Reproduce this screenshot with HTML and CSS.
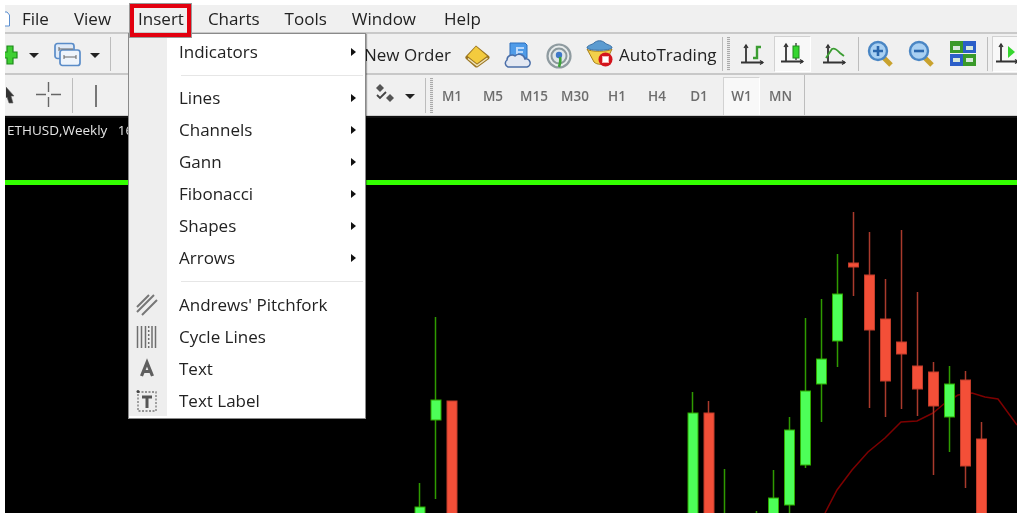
FILE: index.html
```html
<!DOCTYPE html>
<html lang="en">
<head>
<meta charset="utf-8">
<title>MetaTrader Insert menu</title>
<link rel="stylesheet" href="styles.css">
</head>
<body>
<div class="app">
  <nav class="menubar">
    <svg class="doc-icon" width="5" height="16" viewBox="0 0 5 16"><path d="M-2 1H2L4.500 4V15H-2" fill="#fff" stroke="#5b8fd0" stroke-width="1"/></svg>
    <span class="menu-title">File</span>
    <span class="menu-title">View</span>
    <span class="menu-title active">Insert</span>
    <span class="menu-title">Charts</span>
    <span class="menu-title">Tools</span>
    <span class="menu-title wide">Window</span>
    <span class="menu-title">Help</span>
  </nav>

  <div class="toolbar tb-main">
    <svg class="ic plus" width="13" height="22" viewBox="0 0 13 22"><path d="M-4 8h6V2h6v6h4v6H8v6H2v-6h-6z" fill="#3fcf33" stroke="#1d8a1a" stroke-width="1.200"/></svg>
    <span class="caret c1"></span>
    <svg class="ic prof" width="27" height="25" viewBox="0 0 27 25"><rect x="1" y="1.500" width="19" height="15" rx="2.500" fill="#dfeaf8" stroke="#5a8cc8" stroke-width="1.700"/><rect x="6" y="8" width="20" height="15.500" rx="2.500" fill="#eef4fb" stroke="#5a8cc8" stroke-width="1.700"/><path d="M5 5v4M5 7h14M10 13v4M10 15h12M22 13v4" stroke="#666" fill="none"/></svg>
    <span class="caret c2"></span>
    <i class="sep s1"></i>
    <span class="tb-text new-order">New Order</span>
    <svg class="ic book" width="27" height="26" viewBox="0 0 27 26"><path d="M12 2.500 25 13c.8 1 .8 2 0 3L14 24c-1 .8-2 .8-3 0L2 16c-1-1-1-2 0-3z" fill="#9a7420"/><path d="M12 3.500 23 13 13 20.500 3.500 13z" fill="#f3cb3e"/><path d="M4 15.500 13 22.500 23.500 15" fill="none" stroke="#efe3b8" stroke-width="1.500"/></svg>
    <svg class="ic cloud" width="27" height="28" viewBox="0 0 27 28"><path d="M6 2h15l2 2v13H6z" fill="#4f9be8" stroke="#2d6fbd"/><path d="M13 6v8M14 7h6M14 11h5" stroke="#dcecff" stroke-width="1.600"/><path d="M4 26a4 4 0 0 1-1-7 5 5 0 0 1 8-4 6 6 0 0 1 10 3 4 4 0 0 1 2 8z" fill="#e3e8f2" stroke="#4a6ea8" stroke-width="1.500"/></svg>
    <svg class="ic radio" width="27" height="28" viewBox="0 0 27 28"><circle cx="13" cy="14" r="11.500" fill="#e8ecec" stroke="#8f9ba0" stroke-width="2.200"/><circle cx="13" cy="14" r="7.500" fill="#dfe6e8" stroke="#8b989c" stroke-width="2"/><circle cx="13" cy="13" r="3.200" fill="#3f78c8"/><path d="M14 15c1 4 0 7-1 10" stroke="#3ea33a" stroke-width="2.600" fill="none"/></svg>
    <svg class="ic auto" width="27" height="28" viewBox="0 0 27 28"><path d="M1 10c2 3 22 3 25 0l-6 13c-3 3-9 3-12 0z" fill="#f3d04a" stroke="#a8801a"/><path d="M1 9c0-3 5-3 7-5 3-3 8-3 11 0 2 2 7 2 7 5-3 3-22 3-25 0z" fill="#5b9bd0" stroke="#3a70a5"/><circle cx="19.500" cy="20.500" r="7" fill="#d3141c"/><rect x="16.500" y="17.500" width="6" height="6" fill="#fff" stroke="#f6b0b0"/></svg>
    <span class="tb-text auto-text">AutoTrading</span>
    <i class="sep s2"></i>
    <i class="grip g1"></i>
    <svg class="ic ch1" width="24" height="24" viewBox="0 0 24 24"><use href="#axes"/><path d="M12 15h4V4h4" fill="none" stroke="#3b9d32" stroke-width="2.400"/></svg>
    <span class="pressed p-candle"><svg width="24" height="28" viewBox="0 0 24 28"><g transform="translate(0 2)"><use href="#axes"/></g><path d="M15 3v17" stroke="#222" stroke-width="1.200"/><rect x="12" y="6" width="6" height="12" fill="#35d62e" stroke="#1f8a1a"/></svg></span>
    <svg class="ic ch3" width="24" height="24" viewBox="0 0 24 24"><use href="#axes"/><path d="M3 15 9 6c3-2 6 2 8 4l4 3" fill="none" stroke="#3b9d32" stroke-width="1.800"/></svg>
    <i class="sep s3"></i>
    <svg class="ic zin" width="27" height="28" viewBox="0 0 27 28"><path d="M16 17l8 8" stroke="#c9a22e" stroke-width="5"/><circle cx="11" cy="11" r="9" fill="#a9d0f2" stroke="#4a86c4" stroke-width="2.400"/><path d="M6 11h10M11 6v10" stroke="#2a66ac" stroke-width="2.600"/></svg>
    <svg class="ic zout" width="27" height="28" viewBox="0 0 27 28"><path d="M16 17l8 8" stroke="#c9a22e" stroke-width="5"/><circle cx="11" cy="11" r="9" fill="#a9d0f2" stroke="#4a86c4" stroke-width="2.400"/><path d="M6 11h10" stroke="#2a66ac" stroke-width="2.600"/></svg>
    <svg class="ic tile" width="26" height="25" viewBox="0 0 26 25"><rect x="0" y="0" width="13" height="12" fill="#3a9a2a"/><rect x="13" y="0" width="13" height="12" fill="#2c5fc8"/><rect x="0" y="13" width="13" height="12" fill="#2c5fc8"/><rect x="13" y="13" width="13" height="12" fill="#3a9a2a"/><path d="M3 5h7v4H3zM16 5h7v4h-7zM3 17h7v4H3zM16 17h7v4h-7z" fill="#d8e8dc"/></svg>
    <i class="sep s4"></i>
    <span class="pressed p-last"><svg width="26" height="28" viewBox="0 0 26 28"><g transform="translate(3 2)"><use href="#axes"/></g><path d="M15 6v12l7-6z" fill="#35d62e"/></svg></span>
  </div>

  <div class="toolbar tb-tools">
    <svg class="ic cursor" width="10" height="22" viewBox="0 0 10 22"><path d="M0 3 8 12H5l2 7H3L1 13l-3 3z" fill="#333" stroke="#666" stroke-width=".6"/></svg>
    <svg class="ic cross" width="25" height="25" viewBox="0 0 25 25"><path d="M0 12.500h10M15 12.500h10M12.500 0v10M12.500 15v10" stroke="#666" stroke-width="1.400"/></svg>
    <i class="sep s5"></i>
    <i class="vline"></i>
    <svg class="ic objs" width="23" height="22" viewBox="0 0 23 22"><path d="M7 1l4 4-4 4-4-4zM17 11l4 4-4 4-4-4z" fill="#555"/><path d="M4 12l3 3 6-6" fill="none" stroke="#444" stroke-width="1.800"/></svg>
    <span class="caret c3"></span>
    <i class="sep s6"></i>
    <i class="grip g2"></i>
    <span class="tf w-m1">M1</span>
    <span class="tf w-m5">M5</span>
    <span class="tf w-m15">M15</span>
    <span class="tf w-m30">M30</span>
    <span class="tf w-h1">H1</span>
    <span class="tf w-h4">H4</span>
    <span class="tf w-d1">D1</span>
    <span class="tf w-w1 on">W1</span>
    <span class="tf w-mn">MN</span>
    <i class="sep s7"></i>
  </div>

  <div class="chart">
    <span class="chart-title">ETHUSD,Weekly&nbsp;&nbsp; 16</span>
    <svg class="chart-svg" width="1012" height="397" viewBox="5 116 1012 397">
      <rect x="5" y="180" width="1012" height="5" fill="#33ff00"/>
      <polyline class="ma" points="825,513 837,490 852,470 868,452 885,438 901,422 917,421 933,413 945,403 958,395 972,393 985,397 998,399 1017,425"/>
      <g class="wick-g">
        <path d="M419.500 483V513M435.500 317V499M692.500 392V513M724.500 469V513M756.500 511V513M773.500 470V513M789.500 417V513M805.500 318V468M821.500 299V422M837.500 254V367M949.500 366V452"/>
      </g>
      <g class="wick-r">
        <path d="M708.500 401V513M853.500 212V296M869.500 232V408M885.500 279V417M901.500 230V409M917.500 292V416M933.500 362V475M965.500 371V488M981.500 422V513"/>
      </g>
      <g class="body-g">
        <rect x="415" y="507" width="10" height="8"/>
        <rect x="431" y="400" width="10" height="20"/>
        <rect x="688" y="413" width="10" height="102"/>
        <rect x="768.500" y="498" width="10" height="17"/>
        <rect x="784.500" y="430" width="10" height="75"/>
        <rect x="800.500" y="391" width="10" height="74"/>
        <rect x="816.500" y="359" width="10" height="25"/>
        <rect x="832.500" y="294" width="10" height="47"/>
        <rect x="944.500" y="384" width="10" height="33"/>
      </g>
      <g class="body-r">
        <rect x="447" y="401" width="10" height="114"/>
        <rect x="704" y="413" width="10" height="102"/>
        <rect x="848.500" y="263" width="10" height="4"/>
        <rect x="864.500" y="275" width="10" height="55"/>
        <rect x="880.500" y="319" width="10" height="62"/>
        <rect x="896.500" y="342" width="10" height="12"/>
        <rect x="912.500" y="366" width="10" height="23"/>
        <rect x="928.500" y="372" width="10" height="34"/>
        <rect x="960.500" y="380" width="10" height="86"/>
        <rect x="976.500" y="439" width="10" height="76"/>
      </g>
    </svg>
  </div>

  <div class="dropdown">
    <div class="gutter"></div>
    <div class="row"><span>Indicators</span><b class="arrow"></b></div>
    <hr class="divider">
    <div class="row"><span>Lines</span><b class="arrow"></b></div>
    <div class="row"><span>Channels</span><b class="arrow"></b></div>
    <div class="row"><span>Gann</span><b class="arrow"></b></div>
    <div class="row"><span>Fibonacci</span><b class="arrow"></b></div>
    <div class="row"><span>Shapes</span><b class="arrow"></b></div>
    <div class="row"><span>Arrows</span><b class="arrow"></b></div>
    <hr class="divider divider-low">
    <div class="row">
      <svg class="row-ic" width="22" height="22" viewBox="0 0 22 22"><path d="M1 13 13 1M1 18 18 1M6 21 21 6" stroke="#777" stroke-width="2" fill="none"/></svg>
      <span>Andrews' Pitchfork</span>
    </div>
    <div class="row">
      <svg class="row-ic" width="22" height="24" viewBox="0 0 22 24"><path d="M1.500 1v22M5.500 1v22M9.500 1v22M19.500 1v22M16 1v22" stroke="#6f6f6f" stroke-width="1.500" fill="none"/><path d="M12.700 1v22" stroke="#6f6f6f" stroke-width="1.500" stroke-dasharray="2 2" fill="none"/></svg>
      <span>Cycle Lines</span>
    </div>
    <div class="row">
      <svg class="row-ic" width="22" height="22" viewBox="0 0 22 22"><path d="M5.500 18 11 4.500 16.500 18M7.500 13.500h7" stroke="#5f5f5f" stroke-width="3.200" fill="none"/></svg>
      <span>Text</span>
    </div>
    <div class="row">
      <svg class="row-ic" width="22" height="24" viewBox="0 0 22 24"><rect x="2" y="3" width="18" height="19" fill="none" stroke="#777" stroke-width="1.300" stroke-dasharray="2 1.500"/><circle cx="2" cy="2.500" r="1.500" fill="#444"/><path d="M6 8h10M11 8v11" stroke="#555" stroke-width="3" fill="none"/></svg>
      <span>Text Label</span>
    </div>
  </div>
  <span class="red-box"></span>
</div>

<svg width="0" height="0" class="defs">
  <defs>
    <g id="axes" fill="none" stroke="#333" stroke-width="1.800">
      <path d="M5 2v18M0 19.500h22"/>
      <path d="M3 5l2-3 2 3M19 17.500l3 2-3 2" stroke-width="1.300"/>
    </g>
  </defs>
</svg>
</body>
</html>
```

FILE: styles.css
```css
* { box-sizing: border-box; }

html, body {
  margin: 0;
  padding: 0;
  background: #fff;
}

body {
  width: 1024px;
  height: 520px;
  overflow: hidden;
  font-family: "Open Sans", "Liberation Sans", sans-serif;
  color: #222;
}

.app {
  position: relative;
  width: 1012px;
  height: 508px;
  margin: 5px 0 0 5px;
  display: flex;
  flex-direction: column;
  background: #f0f0f0;
  filter: blur(0.35px);
}

.defs { position: absolute; }

/* menu bar */
.menubar {
  height: 29px;
  display: flex;
  align-items: center;
  gap: 25px;
  padding-left: 17px;
  position: relative;
  font-size: 17px;
  border-bottom: 2px solid #c9c9c9;
}

.doc-icon {
  position: absolute;
  left: 0;
  top: 6px;
}

.menu-title { white-space: nowrap; }
.menu-title.active { margin-left: 2px; margin-right: -1px; }
.menu-title.wide { margin-right: 3px; }

/* toolbars */
.toolbar {
  position: relative;
  flex: none;
  overflow: hidden;
  border-bottom: 2px solid #c8c8c8;
}

.tb-main { height: 41px; }
.tb-tools { height: 41px; border-bottom: 1px solid #cfcfcf; }

.ic, .caret, .sep, .grip, .vline, .tb-text, .pressed, .tf {
  position: absolute;
}

.tb-text {
  top: 9px;
  font-size: 17px;
  white-space: nowrap;
}

.new-order { left: 359px; }
.auto-text { left: 614px; }

.caret {
  width: 0;
  height: 0;
  border-left: 5.500px solid transparent;
  border-right: 5.500px solid transparent;
  border-top: 5px solid #222;
}

.c1 { left: 24px; top: 19px; }
.c2 { left: 85px; top: 19px; }
.c3 { left: 400px; top: 19px; }

.sep { width: 1px; top: 3px; bottom: 2px; background: #bdbdbd; }
.s1 { left: 105px; }
.s2 { left: 717px; }
.s3 { left: 853px; }
.s4 { left: 982px; }
.s5 { left: 67px; }
.s6 { left: 420px; }
.s7 { left: 799px; top: 0; bottom: 0; }

.grip {
  top: 3px;
  bottom: 2px;
  width: 3px;
  background: repeating-linear-gradient(#aaa 0 1px, #e8e8e8 1px 2px);
}
.g1 { left: 722px; }
.g2 { left: 425px; }

.vline { left: 90px; top: 10px; width: 2px; height: 22px; background: #777; }

.plus { left: 0; top: 10px; }
.prof { left: 49px; top: 8px; }
.book { left: 459px; top: 9px; }
.cloud { left: 499px; top: 7px; }
.radio { left: 541px; top: 8px; }
.auto { left: 581px; top: 5px; }
.ch1 { left: 736px; top: 9px; }
.ch3 { left: 818px; top: 9px; }
.zin { left: 862px; top: 6px; }
.zout { left: 903px; top: 6px; }
.tile { left: 945px; top: 7px; }

.pressed {
  top: 2px;
  height: 36px;
  background: #f8f8f8;
  border: 1px solid #d2d2d2;
  border-right-color: #fff;
  border-bottom-color: #fff;
}
.p-candle { left: 769px; width: 37px; padding: 3px 0 0 6px; }
.p-last { left: 987px; width: 30px; padding: 3px 0 0 0; border-right: 0; }

.cursor { left: 1px; top: 9px; }
.cross { left: 31px; top: 7px; }
.objs { left: 368px; top: 8px; }

.tf {
  top: 2px;
  height: 38px;
  line-height: 38px;
  font-size: 13.500px;
  font-weight: 600;
  color: #6d6d6d;
  text-align: center;
  white-space: nowrap;
}
.w-m1 { left: 432px; width: 30px; }
.w-m5 { left: 473px; width: 30px; }
.w-m15 { left: 512px; width: 34px; }
.w-m30 { left: 553px; width: 34px; }
.w-h1 { left: 597px; width: 30px; }
.w-h4 { left: 637px; width: 30px; }
.w-d1 { left: 679px; width: 30px; }
.w-w1 { left: 718px; width: 37px; }
.w-mn { left: 757px; width: 37px; }
.on {
  background: #f8f8f8;
  border: 1px solid #d2d2d2;
  border-right-color: #fff;
  border-bottom: 0;
  line-height: 37px;
}

/* chart */
.chart {
  position: relative;
  flex: 1;
  background: #000;
  border-top: 2px solid #111;
  overflow: hidden;
}

.chart-svg {
  position: absolute;
  left: 0;
  top: -2px;
  display: block;
}

.chart-title {
  position: absolute;
  left: 2px;
  top: 3px;
  color: #e4e4e4;
  font-size: 13.500px;
  z-index: 1;
  white-space: nowrap;
}

.ma { fill: none; stroke: #7d0000; stroke-width: 1.500; }
.wick-g path { stroke: #2f9a00; stroke-width: 1.500; fill: none; }
.wick-r path { stroke: #a93a2c; stroke-width: 1.500; fill: none; }
.body-g rect { fill: #4dff58; stroke: #2fa800; stroke-width: 1; }
.body-r rect { fill: #f34f38; stroke: #c23d2a; stroke-width: 1; }

/* dropdown */
.dropdown {
  position: absolute;
  left: 123px;
  top: 28px;
  width: 238px;
  height: 386px;
  padding: 1px 2px 2px 40px;
  background: #fff;
  border: 1px solid #8a8a8a;
  box-shadow: 1px 1px 1px rgba(0,0,0,.3);
  z-index: 2;
  font-size: 17px;
}

.gutter {
  position: absolute;
  left: 0;
  top: 0;
  bottom: 2px;
  width: 38px;
  background: #eeeeee;
}

.row {
  position: relative;
  height: 32px;
  display: flex;
  align-items: center;
  justify-content: space-between;
  padding: 0 7px 0 10px;
}

.row span { white-space: nowrap; }

.arrow {
  width: 0;
  height: 0;
  margin-top: 2px;
  border-top: 4.500px solid transparent;
  border-bottom: 4.500px solid transparent;
  border-left: 5.500px solid #111;
}

.row-ic {
  position: absolute;
  left: -33px;
  top: calc(50% + 1px);
  transform: translateY(-50%);
}

.divider {
  height: 1px;
  margin: 8px 0 5px 12px;
  border: 0;
  background: #e6e6e6;
}

.divider-low { margin-bottom: 6px; }

.red-box {
  position: absolute;
  left: 125px;
  top: -1px;
  width: 61px;
  height: 33px;
  border: 4px solid #e2000f;
  box-shadow: 0 0 0 1px #9a9a9a;
  z-index: 3;
}
```
